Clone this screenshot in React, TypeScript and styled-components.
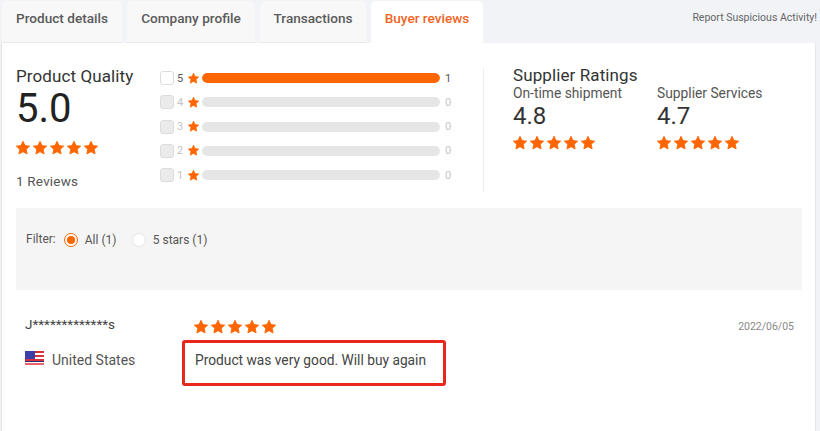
import React from "react";
import styled, { createGlobalStyle } from "styled-components";

const Global = createGlobalStyle`
  html, body { margin: 0; padding: 0; background: #f1f3f6; }
  body { font-family: Roboto, "Liberation Sans", sans-serif; }
`;

const Page = styled.div`
  width: 820px;
  height: 431px;
  overflow: hidden;
  display: flex;
  flex-direction: column;
  background: #f1f3f6;
`;

const TabBar = styled.div`
  height: 43px;
  flex: none;
  display: flex;
  align-items: flex-end;
  gap: 5px;
  padding-left: 2px;
  box-sizing: border-box;
`;

const Tab = styled.div<{ $w: number; $active?: boolean }>`
  width: ${(p) => p.$w}px;
  height: 42px;
  box-sizing: border-box;
  padding-top: 9px;
  text-align: center;
  font-size: 13.6px;
  line-height: 16px;
  font-weight: 500;
  border-radius: 5px 5px 0 0;
  color: ${(p) => (p.$active ? "#f0651f" : "#5a5a5a")};
  background: ${(p) => (p.$active ? "#ffffff" : "#f8f8f9")};
  border-bottom: ${(p) => (p.$active ? "none" : "1px solid #e9e9ec")};
`;

const ReportLink = styled.div`
  margin-left: auto;
  margin-right: 3px;
  align-self: flex-start;
  margin-top: 11px;
  font-size: 10.5px;
  line-height: 14px;
  color: #666;
`;

const Panel = styled.main`
  flex: 1;
  margin-left: 1px;
  width: 815px;
  box-sizing: border-box;
  background: #fff;
  border-left: 1px solid #e3e3e3;
  border-right: 1px solid #e6e6e6;
  padding: 0 13px 0 14px;
`;

const Stats = styled.section`
  display: flex;
  height: 165px;
  box-sizing: border-box;
  padding-top: 23px;
`;

const QualityCol = styled.div`
  width: 144px;
  flex: none;
`;

const Title = styled.div`
  font-size: 17px;
  line-height: 20px;
  color: #333;
  letter-spacing: 0.1px;
`;

const SupplierTitle = styled(Title)`
  margin-top: -1px;
`;

const BigScore = styled.div`
  font-size: 40px;
  line-height: 46px;
  color: #222;
`;

const StarRow = styled.div<{ $mt?: number }>`
  display: flex;
  gap: 3px;
  margin-top: ${(p) => p.$mt ?? 0}px;
`;

const StarIcon = styled.svg<{ $size: number }>`
  width: ${(p) => p.$size}px;
  height: ${(p) => p.$size}px;
  flex: none;
  fill: #ff6600;
  display: block;
`;

const ReviewCount = styled.div`
  margin-top: 18px;
  font-size: 13.5px;
  line-height: 16px;
  color: #555;
  letter-spacing: 0.2px;
`;

const Bars = styled.div`
  width: 324px;
  height: 124px;
  margin-top: 2px;
  padding-top: 3px;
  box-sizing: border-box;
  flex: none;
  display: flex;
  flex-direction: column;
  gap: 10.25px;
  border-right: 1px solid #eeeeee;
`;

const BarRow = styled.div`
  display: flex;
  align-items: center;
  height: 14px;
`;

const Check = styled.span<{ $on?: boolean }>`
  width: 14px;
  height: 14px;
  box-sizing: border-box;
  flex: none;
  border-radius: 3px;
  border: 1px solid #dcdcdc;
  background: ${(p) => (p.$on ? "#fff" : "#ebebeb")};
`;

const BarLabel = styled.span<{ $on?: boolean }>`
  width: 11px;
  margin-left: 3px;
  font-size: 11px;
  color: ${(p) => (p.$on ? "#555" : "#c4c4c4")};
`;

const Track = styled.div`
  width: 238px;
  height: 10px;
  margin-left: 3px;
  border-radius: 5px;
  background: #e6e6e6;
  overflow: hidden;
`;

const Fill = styled.div`
  height: 100%;
  background: #ff6600;
  border-radius: 5px;
`;

const BarCount = styled.span<{ $on?: boolean }>`
  margin-left: 5px;
  font-size: 11px;
  color: ${(p) => (p.$on ? "#555" : "#c4c4c4")};
`;

const SupplierCol = styled.div`
  margin-left: 29px;
  flex: none;
`;

const MetricRow = styled.div`
  display: flex;
`;

const Metric = styled.div<{ $w: number }>`
  width: ${(p) => p.$w}px;
`;

const MetricLabel = styled.div`
  font-size: 13.8px;
  line-height: 16px;
  color: #555;
`;

const MetricValue = styled.div`
  font-size: 24px;
  line-height: 28px;
  margin-top: 1px;
  color: #333;
`;

const FilterBox = styled.section`
  height: 82px;
  background: #f5f5f5;
  display: flex;
  align-items: flex-start;
  box-sizing: border-box;
  padding: 24px 0 0 10px;
  font-size: 12px;
  line-height: 14px;
  color: #555;
`;

const FilterLabel = styled.span`
  margin-right: 8px;
`;

const Radio = styled.span<{ $on?: boolean }>`
  width: 14px;
  height: 14px;
  flex: none;
  box-sizing: border-box;
  border-radius: 50%;
  background: #fff;
  border: 1px solid ${(p) => (p.$on ? "#ff6600" : "#e4e4e4")};
  display: flex;
  align-items: center;
  justify-content: center;
  margin-top: 1px;
  &::after {
    content: "";
    width: 8px;
    height: 8px;
    border-radius: 50%;
    background: ${(p) => (p.$on ? "#ff6600" : "transparent")};
  }
`;

const RadioText = styled.span<{ $w: number }>`
  margin-left: 7px;
  width: ${(p) => p.$w}px;
  margin-top: 1px;
`;

const Review = styled.section`
  display: grid;
  grid-template-columns: 169px 1fr auto;
  padding: 22px 8px 0 9px;
`;

const Buyer = styled.div`
  font-size: 13.5px;
  line-height: 16px;
  color: #444;
  padding-top: 4px;
`;

const DateText = styled.div`
  font-size: 10.5px;
  line-height: 14px;
  color: #888;
  padding-top: 8px;
`;

const Country = styled.div`
  display: flex;
  align-items: center;
  gap: 8px;
  font-size: 14px;
  line-height: 16px;
  color: #555;
  height: 16px;
  margin-top: 18px;
`;

const Flag = styled.svg`
  width: 19px;
  height: 14px;
  flex: none;
  margin-top: -4px;
`;

const Body = styled.div`
  grid-column: 2 / 4;
  margin: 6px 0 0 -12px;
  width: 264px;
  height: 46px;
  box-sizing: border-box;
  border: 3px solid #e8281e;
  border-radius: 3px;
  padding: 8px 0 0 10px;
  font-size: 13.76px;
  line-height: 18px;
  color: #444;
`;

const LeftCell = styled.div`
  grid-row: 2;
  grid-column: 1;
`;

const Star = ({ size }: { size: number }) => (
  <StarIcon $size={size} viewBox="0 0 24 24">
    <path
      d="M12 .5L15.41 7.81 23.4 8.8 17.52 14.29 19.05 22.2 12 18.3 4.95 22.2 6.48 14.29 .6 8.8 8.59 7.81z"
      stroke="#ff6600"
      strokeWidth="1.5"
      strokeLinejoin="round"
    />
  </StarIcon>
);

const Stars = ({ mt }: { mt?: number }) => (
  <StarRow $mt={mt}>
    {[0, 1, 2, 3, 4].map((i) => (
      <Star key={i} size={14} />
    ))}
  </StarRow>
);

const US = () => (
  <Flag viewBox="0 0 19 14">
    <rect width="19" height="14" fill="#fff" />
    <rect y="0" width="19" height="2" fill="#d8323c" />
    <rect y="4" width="19" height="2" fill="#d8323c" />
    <rect y="8" width="19" height="2" fill="#d8323c" />
    <rect y="12" width="19" height="2" fill="#f0606a" />
    <rect width="10" height="8" fill="#3c3fa8" />
    <rect y="10" width="19" height="1" fill="#2a2f7a" />
  </Flag>
);

const rows = [
  { n: 5, c: 1, on: true },
  { n: 4, c: 0 },
  { n: 3, c: 0 },
  { n: 2, c: 0 },
  { n: 1, c: 0 },
];

export default function App() {
  return (
    <Page>
      <Global />
      <TabBar>
        <Tab $w={120}>Product details</Tab>
        <Tab $w={128}>Company profile</Tab>
        <Tab $w={106}>Transactions</Tab>
        <Tab $w={112} $active>
          Buyer reviews
        </Tab>
        <ReportLink>Report Suspicious Activity!</ReportLink>
      </TabBar>
      <Panel>
        <Stats>
          <QualityCol>
            <Title>Product Quality</Title>
            <BigScore>5.0</BigScore>
            <Stars mt={9} />
            <ReviewCount>1 Reviews</ReviewCount>
          </QualityCol>
          <Bars>
            {rows.map((r) => (
              <BarRow key={r.n}>
                <Check $on={r.on} />
                <BarLabel $on={r.on}>{r.n}</BarLabel>
                <Star size={11} />
                <Track>{r.on && <Fill style={{ width: "100%" }} />}</Track>
                <BarCount $on={r.on}>{r.c}</BarCount>
              </BarRow>
            ))}
          </Bars>
          <SupplierCol>
            <SupplierTitle>Supplier Ratings</SupplierTitle>
            <MetricRow>
              <Metric $w={144}>
                <MetricLabel>On-time shipment</MetricLabel>
                <MetricValue>4.8</MetricValue>
                <Stars mt={6} />
              </Metric>
              <Metric $w={120}>
                <MetricLabel>Supplier Services</MetricLabel>
                <MetricValue>4.7</MetricValue>
                <Stars mt={6} />
              </Metric>
            </MetricRow>
          </SupplierCol>
        </Stats>
        <FilterBox>
          <FilterLabel>Filter:</FilterLabel>
          <Radio $on />
          <RadioText $w={47}>All (1)</RadioText>
          <Radio />
          <RadioText $w={70}>5 stars (1)</RadioText>
        </FilterBox>
        <Review>
          <Buyer>J*************s</Buyer>
          <Stars mt={8} />
          <DateText>2022/06/05</DateText>
          <LeftCell>
            <Country>
              <US />
              United States
            </Country>
          </LeftCell>
          <Body>Product was very good. Will buy again</Body>
        </Review>
      </Panel>
    </Page>
  );
}
